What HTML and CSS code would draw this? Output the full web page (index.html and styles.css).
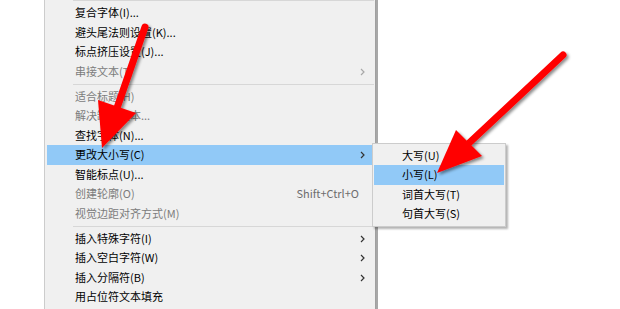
FILE: index.html
```html
<!DOCTYPE html>
<html lang="zh">
<head>
<meta charset="utf-8">
<link rel="stylesheet" href="styles.css">
</head>
<body>
<div class="stage">
  <div class="menu">
    <div class="sep top"></div>
    <div class="item">复合字体(I)...</div>
    <div class="item">避头尾法则设置(K)...</div>
    <div class="item">标点挤压设置(J)...</div>
    <div class="item disabled">串接文本(T)<svg class="chev" width="5" height="8" viewBox="0 0 5 8"><polyline points="1,1 4,4 1,7"/></svg></div>
    <div class="sep"></div>
    <div class="item disabled">适合标题(H)</div>
    <div class="item disabled">解决缺字文本...</div>
    <div class="item">查找字体(N)...</div>
    <div class="item active">更改大小写(C)<svg class="chev" width="5" height="8" viewBox="0 0 5 8"><polyline points="1,1 4,4 1,7"/></svg></div>
    <div class="item">智能标点(U)...</div>
    <div class="item disabled">创建轮廓(O)<span class="key">Shift+Ctrl+O</span></div>
    <div class="item disabled">视觉边距对齐方式(M)</div>
    <div class="sep"></div>
    <div class="item">插入特殊字符(I)<svg class="chev" width="5" height="8" viewBox="0 0 5 8"><polyline points="1,1 4,4 1,7"/></svg></div>
    <div class="item">插入空白字符(W)<svg class="chev" width="5" height="8" viewBox="0 0 5 8"><polyline points="1,1 4,4 1,7"/></svg></div>
    <div class="item">插入分隔符(B)<svg class="chev" width="5" height="8" viewBox="0 0 5 8"><polyline points="1,1 4,4 1,7"/></svg></div>
    <div class="item">用占位符文本填充</div>
  </div>

  <div class="submenu">
    <div class="item">大写(U)</div>
    <div class="item active">小写(L)</div>
    <div class="item">词首大写(T)</div>
    <div class="item">句首大写(S)</div>
  </div>

  <svg class="arrows" width="620" height="309" viewBox="0 0 620 309">
    <defs>
      <filter id="sh" x="-20%" y="-20%" width="140%" height="140%">
        <feDropShadow dx="2" dy="2" stdDeviation="1.8" flood-color="#000" flood-opacity="0.45"/>
      </filter>
    </defs>
    <g filter="url(#sh)" fill="#ff0000" stroke="#ff0000">
      <line x1="145" y1="27" x2="117" y2="108" stroke-width="7" stroke-linecap="round"/>
      <polygon points="102,148 98,100 136,113" stroke="none"/>
      <line x1="563" y1="55" x2="468" y2="144" stroke-width="7" stroke-linecap="round"/>
      <polygon points="437,173 456,130 482,156" stroke="none"/>
    </g>
  </svg>
</div>
</body>
</html>
```
FILE: styles.css
```css
html, body {
  margin: 0;
  padding: 0;
  background: #ffffff;
}
.stage {
  position: relative;
  width: 620px;
  height: 309px;
  overflow: hidden;
  font-family: "Noto Sans CJK SC", "Noto Sans", sans-serif;
  font-size: 11px;
  color: #000;
}
.menu {
  margin-left: 44px;
  width: 330px;
  height: 330px;
  background: #f0f0f0;
  border-left: 1px solid #cccccc;
  border-right: 1px solid #a0a0a0;
  box-shadow: 2px 0 0 #a8a8a8;
}
.sep {
  height: 1px;
  background: #d7d7d7;
  margin: 2.25px 1px 2.25px 28px;
}
.sep.top {
  margin-top: 0;
}
.item {
  position: relative;
  height: 19.5px;
  line-height: 19.5px;
  margin: 0 1px 0 2px;
  padding-left: 28px;
  white-space: nowrap;
}
.item.disabled {
  color: #7c7c7c;
}
.item.active {
  background: #91c9f7;
}
.chev {
  position: absolute;
  right: 9px;
  top: 6px;
}
.chev polyline {
  fill: none;
  stroke: #333;
  stroke-width: 1.2;
}
.disabled .chev polyline {
  stroke: #a8a8a8;
}
.key {
  position: absolute;
  right: 15px;
  top: 0;
  color: #6d6d6d;
}
.submenu {
  position: absolute;
  left: 372px;
  top: 143px;
  width: 132px;
  padding: 1.5px 0 2.5px;
  background: #f0f0f0;
  border: 1px solid #cccccc;
  box-shadow: 2px 2px 2px rgba(0, 0, 0, 0.3);
}
.submenu .item {
  margin: 0 1px;
  padding-left: 28px;
}
.arrows {
  position: absolute;
  left: 0;
  top: 0;
  pointer-events: none;
}
```
